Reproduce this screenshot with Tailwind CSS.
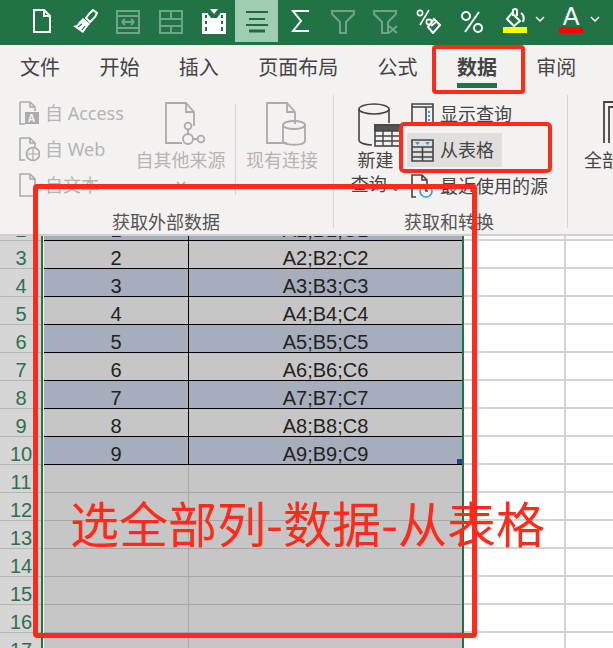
<!DOCTYPE html>
<html lang="zh-CN">
<head>
    <meta charset="UTF-8">
    <title>数据-从表格</title>
    <script src="https://cdn.jsdelivr.net/npm/@tailwindcss/browser@4"></script>
</head>
<body class="w-[613px] h-[648px] overflow-hidden bg-white font-['Noto_Sans','Noto_Sans_CJK_SC',sans-serif]">
<div class="relative w-[613px] h-[648px] overflow-hidden">

    <!-- quick access bar -->
    <div class="h-[45px] bg-[#217346] flex pl-[20px] items-start">
        <div class="w-[43px] h-[42px] flex items-center justify-center">
            <svg width="20" height="24" fill="none" stroke="#fff" stroke-width="2"><path d="M2 1h10l6 6v16H2zM12 1v6h6"/></svg>
        </div>
        <div class="w-[43px] h-[42px] flex items-center justify-center">
            <svg width="26" height="25" viewBox="0 0 26 25" fill="none"><path d="M18 4l3-3 4 3-2 4-5 5-4-4z" stroke="#fff" stroke-width="2"/><path d="M11 9l7 6-2 2-5 7-10-7 4-1 2-3 1-1z" fill="#fff"/><path d="M6 18l4-3M10 21l3-4" stroke="#217346" stroke-width="1.2"/></svg>
        </div>
        <div class="w-[43px] h-[42px] flex items-center justify-center opacity-35">
            <svg width="24" height="25" fill="none" stroke="#fff" stroke-width="2"><path d="M1 2h22v22H1zM1 7h22M1 19h22M6 13h12M6 13l3-3M6 13l3 3M18 13l-3-3M18 13l-3 3"/></svg>
        </div>
        <div class="w-[43px] h-[42px] flex items-center justify-center opacity-35">
            <svg width="24" height="25" fill="none" stroke="#fff" stroke-width="2"><path d="M1 2h22v22H1zM1 10h22M1 17h22M12 2v8M12 17v7"/></svg>
        </div>
        <div class="w-[43px] h-[42px] flex items-center justify-center">
            <svg width="26" height="25" fill="#fff"><path d="M1 4h24v21H1z"/><path d="M4 6h2v3H4zM20 6h2v3h-2zM4 12h2v3H4zM20 12h2v3h-2zM4 18h2v4H4zM20 18h2v4h-2z" fill="#217346"/><path d="M7 4h12v1l-3 4h-6L7 5z" fill="#217346"/><path d="M9 0h8l-4 5z"/></svg>
        </div>
        <div class="w-[43px] h-[42px] flex items-center justify-center bg-[#a0cdb2]">
            <svg width="24" height="24" fill="none" stroke="#1e6b40" stroke-width="2"><path d="M1 3h22M4 10h16M1 16h22"/><path d="M4 22h16" stroke-width="3"/></svg>
        </div>
        <div class="w-[43px] h-[42px] flex items-center justify-center">
            <svg width="20" height="24" fill="none" stroke="#fff" stroke-width="2"><path d="M19 2H3l8 10-8 10h16"/></svg>
        </div>
        <div class="w-[43px] h-[42px] flex items-center justify-center opacity-35">
            <svg width="24" height="25" fill="none" stroke="#fff" stroke-width="2"><path d="M1 2h22v3l-8 8v11H9V13L1 5z"/></svg>
        </div>
        <div class="w-[43px] h-[42px] flex items-center justify-center opacity-35">
            <svg width="25" height="25" fill="none" stroke="#fff" stroke-width="2"><path d="M1 2h22v3l-8 8v11H9V13L1 5zM16 17l8 7M24 17l-8 7"/></svg>
        </div>
        <div class="w-[43px] h-[42px] flex items-center justify-center">
            <svg width="25" height="25" fill="none" stroke="#fff" stroke-width="1.6"><circle cx="4" cy="4" r="2.6"/><circle cx="13" cy="13" r="2.600"/><path d="M13 1L4 16"/><path d="M18 10l6 6-7 8-5-6z" stroke-width="2"/><path d="M15 17l5-4" stroke-width="2"/></svg>
        </div>
        <div class="w-[43px] h-[42px] flex items-center justify-center">
            <svg width="24" height="25" fill="none" stroke="#fff" stroke-width="2"><circle cx="6" cy="7" r="4"/><circle cx="18" cy="19" r="4"/><path d="M19 3L5 23"/></svg>
        </div>
        <div class="w-[43px] h-[42px] flex flex-col items-center pt-[8px] pl-[1px]">
            <svg width="22" height="19" fill="none" stroke="#fff" stroke-width="2"><path d="M8 5l8 8-6 5-7-7z"/><path d="M9 8V3a2 2 0 0 1 4 0v5M17 5c3 2 3 6 2 9"/></svg>
            <div class="w-[24px] h-[6px] bg-[#ffff00]"></div>
        </div>
        <svg class="mt-[16px] -ml-[1px]" width="10" height="7" fill="none" stroke="#fff" stroke-width="1.5"><path d="M1 1l4 4 4-4"/></svg>
        <div class="w-[24px] ml-[14px] h-[42px] flex flex-col items-center pt-[6px]">
            <span class="text-[25px] leading-[21px] text-white font-['Liberation_Sans'] font-light">A</span>
            <div class="w-[24px] h-[6px] bg-[#ff0000]"></div>
        </div>
        <svg class="mt-[16px] ml-[7px]" width="10" height="7" fill="none" stroke="#fff" stroke-width="1.5"><path d="M1 1l4 4 4-4"/></svg>
    </div>

    <!-- tabs -->
    <div class="h-[45px] bg-[#f3f2f1] flex pl-[20px] gap-[39.4px] text-[20px] text-[#444] items-start pt-[8px]">
        <span class="leading-[30px]">文件</span>
        <span class="leading-[30px]">开始</span>
        <span class="leading-[30px]">插入</span>
        <span class="leading-[30px]">页面布局</span>
        <span class="leading-[30px]">公式</span>
        <span class="leading-[30px] font-bold text-[#444] border-b-[5px] border-[#217346] h-[35px]">数据</span>
        <span class="leading-[30px]">审阅</span>
    </div>

    <!-- ribbon -->
    <div class="h-[146px] bg-[#f3f2f1] border-b-2 border-[#d0d0d0] flex text-[18px]">
        <!-- external data -->
        <div class="w-[334px] shrink-0 border-r border-[#d4d4d4] mt-[5px] mb-[6px] flex flex-col relative">
            <div class="flex pl-[19px] text-[#b4b4b4]">
                <div class="w-[120px] shrink-0 flex flex-col">
                    <div class="h-[36px] shrink-0 flex items-center gap-[5px]">
                        <svg width="21" height="25" fill="none" stroke="#ababab" stroke-width="1.6"><path d="M1 1h10l5 5v4M1 1v22h5M11 1v5h5"/><rect x="6" y="11" width="14" height="12" fill="#ababab" stroke="none"/><text x="9" y="21" font-size="10" font-weight="700" fill="#f3f2f1" stroke="none">A</text></svg>
                        <span class="whitespace-nowrap">自 Access</span>
                    </div>
                    <div class="h-[36px] shrink-0 flex items-center gap-[5px]">
                        <svg width="21" height="25" fill="none" stroke="#ababab" stroke-width="1.6"><path d="M1 1h10l5 5v5M1 1v22h5M11 1v5h5"/><circle cx="14" cy="17" r="6.5"/><path d="M7 17h13M14 10v14" stroke-width="1.2"/></svg>
                        <span class="whitespace-nowrap">自 Web</span>
                    </div>
                    <div class="h-[36px] shrink-0 flex items-center gap-[5px]">
                        <svg width="21" height="25" fill="none" stroke="#ababab" stroke-width="1.6"><path d="M1 1h10l5 5v17H1zM11 1v5h5"/></svg>
                        <span class="whitespace-nowrap">自文本</span>
                    </div>
                </div>
                <div class="w-[99px] shrink-0 flex flex-col items-center -ml-[2px] border-r border-[#d4d4d4] h-[91px] pr-[11px] mt-[9px]">
                    <svg class="ml-[8px] -mt-[2px]" width="42" height="44" fill="none" stroke="#ababab" stroke-width="1.8"><path d="M18 41H2V1h20l8 9v14M22 1v9h8"/><circle cx="24" cy="24" r="3.4"/><circle cx="24" cy="37" r="5"/><circle cx="37" cy="37" r="3.4"/><path d="M24 27v5M29 37h5"/></svg>
                    <span class="whitespace-nowrap mt-[2px] leading-[24px]">自其他来源</span>
                    <svg class="mt-[9px]" width="10" height="7" fill="none" stroke="#ababab" stroke-width="1.5"><path d="M1 1l4 4 4-4"/></svg>
                </div>
                <div class="flex flex-col items-center pl-[10px] mt-[7px]">
                    <svg class="ml-[8px]" width="42" height="44" fill="none" stroke="#ababab" stroke-width="1.8"><path d="M22 41H2V1h20l8 9v12M22 1v9h8"/><ellipse cx="29" cy="23" rx="11" ry="4"/><path d="M18 23v16c0 5 22 5 22 0V23"/></svg>
                    <span class="whitespace-nowrap mt-[2px] leading-[24px]">现有连接</span>
                </div>
            </div>
            <div class="absolute -bottom-[7px] left-[112px] text-[#555] leading-[26px] whitespace-nowrap">获取外部数据</div>
        </div>

        <!-- get and transform -->
        <div class="w-[234px] shrink-0 border-r border-[#d4d4d4] mt-[5px] mb-[6px] flex relative text-[#444] pt-[1px]">
            <div class="w-[73px] shrink-0 flex flex-col items-center pl-[10px] pt-[6px]">
                <svg class="ml-[9px]" width="46" height="46" fill="none" stroke="#444" stroke-width="1.6"><ellipse cx="17" cy="7" rx="15" ry="5"/><path d="M2 7v31c0 3 7 5 13 5M32 7v14"/><rect x="18" y="23" width="26" height="21" fill="#f3f2f1"/><path d="M18 23h26v6H18z" fill="#555"/><path d="M18 34h26M18 39h26M26 29v15M35 29v15" stroke-width="1.4"/></svg>
                <span class="leading-[24px] whitespace-nowrap">新建</span>
                <span class="leading-[24px] whitespace-nowrap">查询 <span class="text-[11px]">⌄</span></span>
            </div>
            <div class="flex flex-col">
                <div class="h-[36px] flex items-center gap-[6px] pl-[4px]">
                    <svg width="23" height="25" fill="none" stroke="#444" stroke-width="1.6"><path d="M1 2h21v21H1zM1 5h21M15 5v18"/><path d="M18 9v2M18 13v2M18 17v2" stroke="#2e9be0" stroke-width="2"/></svg>
                    <span class="whitespace-nowrap">显示查询</span>
                </div>
                <div class="h-[34px] w-[95px] mt-[1px] bg-[#e1dfdd] flex items-center gap-[6px] pl-[4px]">
                    <svg width="23" height="23" fill="none" stroke="#444" stroke-width="1.6"><path d="M1 1h21v21H1zM1 8h21M1 13h21M1 18h21M11.500 8v14"/><path d="M4 3h5l-2.500 3zM14 3h5l-2.500 3z" fill="#2e9be0" stroke="none"/></svg>
                    <span class="whitespace-nowrap">从表格</span>
                </div>
                <div class="h-[36px] mt-[1px] flex items-center gap-[6px] pl-[4px]">
                    <svg width="23" height="25" fill="none" stroke="#444" stroke-width="1.6"><path d="M5 23H1V1h10l5 5v5M11 1v5h5"/><circle cx="15" cy="17" r="6" stroke="#2e9be0"/><path d="M15 14v3h2"/></svg>
                    <span class="whitespace-nowrap">最近使用的源</span>
                </div>
            </div>
            <div class="absolute -bottom-[7px] left-[70px] text-[#555] leading-[26px] whitespace-nowrap">获取和转换</div>
        </div>

        <!-- refresh, cut off by the window edge -->
        <div class="flex-1 overflow-hidden flex flex-col items-start pl-[16px] pt-[11px] text-[#444]">
            <svg class="ml-[19px]" width="30" height="42" fill="none" stroke="#444" stroke-width="1.8"><path d="M1 42V1h29M6 42V6h24"/></svg>
            <span class="whitespace-nowrap leading-[24px] mt-[5px]">全部</span>
        </div>
    </div>

    <!-- sheet -->
    <div class="h-[412px] overflow-hidden">
        <div id="rows" class="-mt-[23px] font-['Liberation_Sans'] text-[20px]"></div>
    </div>

    <!-- annotations -->
    <div class="absolute left-[432px] top-[45px] w-[93px] h-[49px] border-4 border-[#ff2a1a] rounded-[4px]"></div>
    <div class="absolute left-[399px] top-[122px] w-[153px] h-[51px] border-4 border-[#ff2a1a] rounded-[5px]"></div>
    <div class="absolute left-[33px] top-[184px] w-[444px] h-[454px] border-[5px] border-[#ff2a1a] rounded-[4px]"></div>
    <div class="absolute left-[70px] top-[487px] text-[49px] leading-[70px] text-[#ff2a1a] whitespace-nowrap font-['Noto_Sans_CJK_SC']">选全部列-数据-从表格</div>
</div>

<script>
    const rows = document.getElementById('rows');
    let html = '';
    for (let r = 2; r <= 17; r++) {
        const n = r - 1;
        const inTable = r <= 10;
        const fill = inTable && r % 2 === 0 ? 'bg-[#a6adbc]' : 'bg-[#c6c6c6]';
        const line = inTable ? 'border-black' : 'border-[#a8a8a8]';
        html += `<div class="flex h-[28px]">
            <div class="w-[41px] shrink-0 overflow-hidden bg-[#d6d6d6] border-b border-[#b4b4b4] text-[#2f6f4f] text-center leading-[34px] pl-[1px]">${r}</div>
            <div class="w-[2px] shrink-0 bg-[#217346]"></div>
            <div class="w-[1px] shrink-0 bg-white"></div>
            <div class="w-[145px] shrink-0 overflow-hidden border-b border-r ${line} ${fill} text-[#222] text-center leading-[34px]">${inTable ? n : ''}</div>
            <div class="w-[273px] shrink-0 overflow-hidden border-b ${line} ${fill} text-[#222] text-center leading-[34px] relative">${inTable ? `A${n};B${n};C${n}` : ''}${r === 10 ? '<i class="absolute right-0 bottom-0 w-[5px] h-[5px] bg-[#2f3f80]"></i>' : ''}</div>
            <div class="w-[2px] shrink-0 bg-[#217346]"></div>
            <div class="w-[102px] shrink-0 border-b-2 border-r-2 border-[#d4d4d4]"></div>
            <div class="flex-1 border-b-2 border-[#d4d4d4]"></div>
        </div>`;
    }
    rows.innerHTML = html;
</script>
</body>
</html>
